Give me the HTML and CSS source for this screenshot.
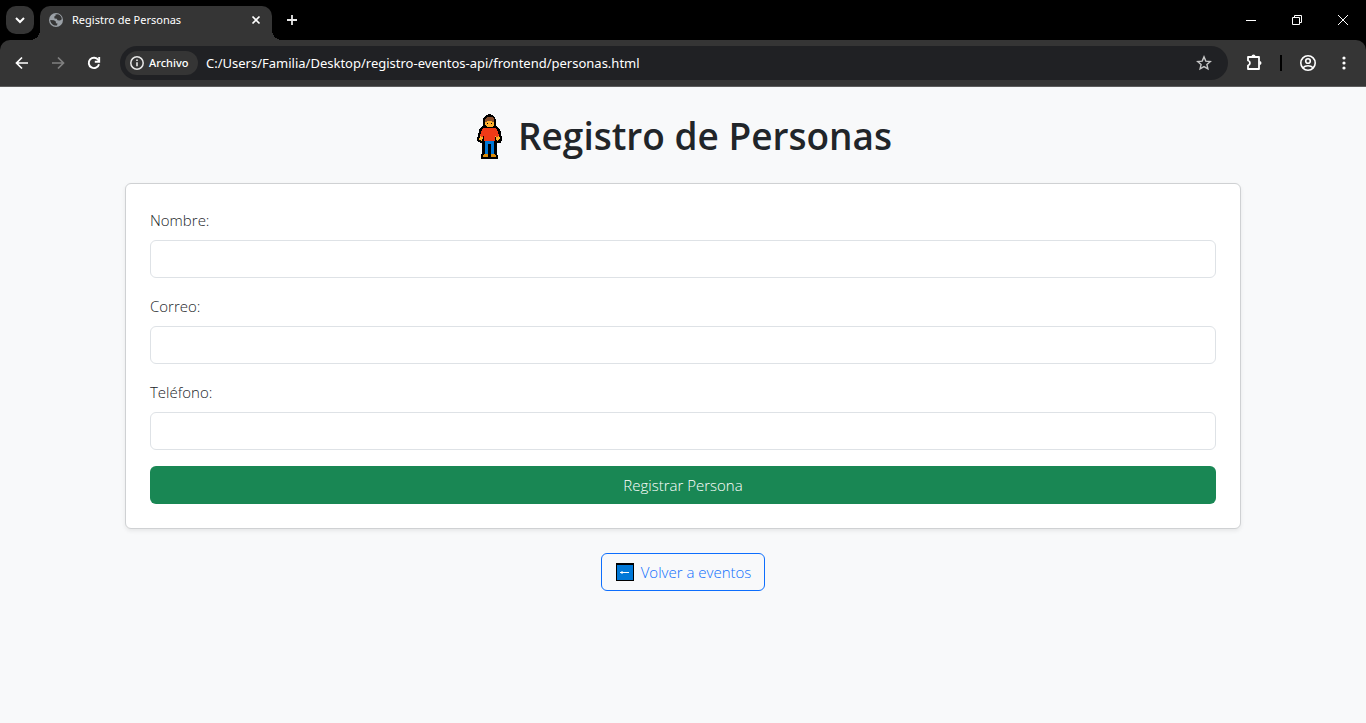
FILE: index.html
```html
<!DOCTYPE html>
<html lang="es">
<head>
<meta charset="utf-8">
<meta name="viewport" content="width=device-width, initial-scale=1">
<title>Registro de Personas</title>
<link rel="stylesheet" href="styles.css">
</head>
<body>
<header class="browser">
  <div class="tabstrip">
    <button class="tab-search" type="button" aria-label="Buscar pestañas">
      <svg width="16" height="16" viewBox="0 0 16 16" fill="none" stroke="#fff" stroke-width="2"><path d="M4 6l4 4 4-4"/></svg>
    </button>
    <div class="tab">
      <svg width="16" height="16" viewBox="0 0 16 16"><circle cx="8" cy="8" r="7" fill="#9aa0a6"/><path d="M7.500 2.500L10 2.200C12.500 3 13.800 5 13.800 7.200L12 8.500 9.500 8.200 8.800 6.800 6.500 6.500 6.200 4.500 7.500 4zM2.200 8L6 8.200 8 9.800 7.800 11.200 9.500 11.500 9 13.500C5.500 14 2.500 11.500 2.200 8z" fill="#353535"/></svg>
      <span class="tab-title">Registro de Personas</span>
      <button class="icon-button" type="button" aria-label="Cerrar pestaña">
        <svg width="16" height="16" viewBox="0 0 16 16" fill="none" stroke="#fff" stroke-width="1.700"><path d="M4.500 4.500l7 7M11.500 4.500l-7 7"/></svg>
      </button>
    </div>
    <button class="icon-button new-tab" type="button" aria-label="Nueva pestaña">
      <svg width="16" height="16" viewBox="0 0 16 16" fill="none" stroke="#e8e8e8" stroke-width="1.800"><path d="M8 3v10M3 8h10"/></svg>
    </button>
    <div class="window-controls">
      <button class="window-button" type="button" aria-label="Minimizar">
        <svg width="12" height="12" viewBox="0 0 12 12" stroke="#fff" fill="none"><path d="M1 6.500h10"/></svg>
      </button>
      <button class="window-button" type="button" aria-label="Restaurar">
        <svg width="12" height="12" viewBox="0 0 12 12" stroke="#fff" fill="none"><path d="M1.500 3.500h7v7h-7zM3.500 3.500v-2h7v7h-2"/></svg>
      </button>
      <button class="window-button" type="button" aria-label="Cerrar">
        <svg width="12" height="12" viewBox="0 0 12 12" stroke="#fff" fill="none"><path d="M1 1l10 10M11 1L1 11"/></svg>
      </button>
    </div>
  </div>
  <div class="toolbar">
    <div class="nav">
      <button class="icon-button" type="button" aria-label="Atrás">
        <svg width="16" height="16" viewBox="0 0 16 16" fill="none" stroke="#fff" stroke-width="1.700"><path d="M14 8H3M8 2.500L2.500 8 8 13.500"/></svg>
      </button>
      <button class="icon-button" type="button" aria-label="Adelante">
        <svg width="16" height="16" viewBox="0 0 16 16" fill="none" stroke="#808080" stroke-width="1.700"><path d="M2 8h11M8 2.500L13.500 8 8 13.500"/></svg>
      </button>
      <button class="icon-button" type="button" aria-label="Recargar">
        <svg width="16" height="16" viewBox="0 0 16 16" fill="none" stroke="#fff" stroke-width="1.900"><path d="M13 9.200A5.200 5.200 0 1 1 12.300 5L13 6"/><path d="M13.200 2v4.800H8.800"/></svg>
      </button>
    </div>
    <div class="omnibox">
      <button class="site-chip" type="button">
        <svg width="16" height="16" viewBox="0 0 16 16" fill="none" stroke="#e8e8e8"><circle cx="8" cy="8" r="6.200" stroke-width="1.500"/><path d="M8 7.200v4M8 4.500v1.600" stroke-width="1.600"/></svg>
        <span>Archivo</span>
      </button>
      <input class="address" type="text" aria-label="Dirección" value="C:/Users/Familia/Desktop/registro-eventos-api/frontend/personas.html">
      <button class="icon-button" type="button" aria-label="Añadir a marcadores">
        <svg width="16" height="16" viewBox="0 0 16 16" fill="none" stroke="#c7c7c7" stroke-width="1.400"><path d="M8 1.900l1.800 4.200 4.500.4-3.400 3 1 4.400L8 11.600l-3.900 2.300 1-4.400-3.400-3 4.500-.4z"/></svg>
      </button>
    </div>
    <div class="actions">
      <button class="icon-button" type="button" aria-label="Extensiones">
        <svg width="20" height="20" viewBox="0 0 20 20"><path d="M5 4h11v12H5v-3.500c2.600-.8 2.600-4.200 0-5z" fill="none" stroke="#fff" stroke-width="1.800" stroke-linejoin="round"/><path d="M8.500 3.500a2 2 0 0 1 4 0zM16.500 8a2 2 0 0 1 0 4z" fill="#fff"/></svg>
      </button>
      <span class="divider"></span>
      <button class="icon-button" type="button" aria-label="Perfil">
        <svg width="20" height="20" viewBox="0 0 20 20" fill="none" stroke="#fff" stroke-width="1.600"><circle cx="9" cy="10" r="7.200"/><circle cx="9" cy="8" r="2.300"/><path d="M4 14.800c2.400-2.800 7.600-2.800 10 0"/></svg>
      </button>
      <button class="icon-button" type="button" aria-label="Menú">
        <svg width="16" height="16" viewBox="0 0 16 16" fill="#fff"><circle cx="8" cy="3" r="1.600"/><circle cx="8" cy="8" r="1.600"/><circle cx="8" cy="13" r="1.600"/></svg>
      </button>
    </div>
  </div>
</header>
<main class="container">
  <h1 class="title">
    <svg width="28" height="46" viewBox="0 0 28 46" shape-rendering="crispEdges">
      <path d="M13 1L16 2 19 4 20 7V13L23 15 25 19 26 27 25 30H21V41L22 43V46H5V41L6 40V30L2 29 1 26 3 18 4 15 7 13V6L9 3z" fill="#000"/>
      <path d="M9 8h9v4l-2 2h-5l-2-2z" fill="#ffb02e"/>
      <path d="M11 4h5l2 2v3h-2V8h-5v1H9V6z" fill="#8b4f2a"/>
      <path d="M11 10h1v1h-1zM15 10h1v1h-1z" fill="#000"/>
      <path d="M5 19l-2 8 3 1 2-6zM22 19l2 7-3 2-2-6z" fill="#ffb02e"/>
      <path d="M8 15h11l2 1 2 7-2 1-2-1v5H8v-5l-2 1-2-1 2-7z" fill="#f03a17"/>
      <path d="M9 28h9v13h-3V31h-3v10H9z" fill="#0078d7"/>
      <path d="M9 41h3v3H7v-2zM15 41h3l2 1v2h-5z" fill="#d98a08"/>
    </svg>
    <span>Registro de Personas</span>
  </h1>
  <form class="card">
    <div class="field">
      <label for="nombre">Nombre:</label>
      <input class="control" id="nombre" type="text">
    </div>
    <div class="field">
      <label for="correo">Correo:</label>
      <input class="control" id="correo" type="email">
    </div>
    <div class="field">
      <label for="telefono">Teléfono:</label>
      <input class="control" id="telefono" type="tel">
    </div>
    <button class="submit" type="button">Registrar Persona</button>
  </form>
  <div class="back">
    <a class="back-link" href="#">
      <svg width="20" height="18" viewBox="0 0 20 18"><path d="M1 0h18v18H1z" fill="#000"/><path d="M2 2h16v15H2z" fill="#0078d7"/><path d="M5 9.500h9M7.500 8L6 9.500 7.500 11" fill="none" stroke="#fff"/></svg>
      <span>Volver a eventos</span>
    </a>
  </div>
</main>
</body>
</html>
```
FILE: styles.css
```css
* {
  box-sizing: border-box;
}

body {
  margin: 0;
  min-height: 100vh;
  background: #f8f9fa;
  color: #212529;
  font: 300 15px/24px "Open Sans", "Noto Sans", sans-serif;
}

button,
input {
  margin: 0;
  padding: 0;
  border: 0;
  background: none;
  color: inherit;
  font: inherit;
}

svg {
  display: block;
  flex: none;
}

.browser {
  background: #000;
  color: #fff;
  font: 400 11px/16px "Noto Sans", sans-serif;
}

.tabstrip {
  display: flex;
  height: 40px;
  padding-left: 6px;
}

.tab-search {
  display: grid;
  place-items: center;
  width: 28px;
  height: 28px;
  margin: 6px 6px 0 0;
  border-radius: 10px;
  background: #353535;
}

.tab {
  position: relative;
  display: flex;
  align-items: center;
  gap: 8px;
  width: 232px;
  height: 34px;
  margin-top: 6px;
  padding: 0 8px 6px;
  border-radius: 10px 10px 0 0;
  background: #353535;
}

.tab::before,
.tab::after {
  content: "";
  position: absolute;
  bottom: 0;
  width: 10px;
  height: 10px;
}

.tab::before {
  right: 100%;
  background: radial-gradient(circle at 0 0, transparent 10px, #353535 10px);
}

.tab::after {
  left: 100%;
  background: radial-gradient(circle at 100% 0, transparent 10px, #353535 10px);
}

.tab-title {
  flex: 1;
}

.icon-button {
  display: grid;
  place-items: center;
  flex: none;
}

.new-tab {
  width: 40px;
}

.window-controls {
  display: flex;
  margin-left: auto;
}

.window-button {
  display: grid;
  place-items: center;
  width: 46px;
}

.toolbar {
  display: flex;
  align-items: center;
  height: 47px;
  border-bottom: 1px solid #5c5c5c;
  border-radius: 10px 10px 0 0;
  background: #353535;
}

.nav {
  display: flex;
  gap: 20px;
  padding: 0 18px 0 14px;
}

.omnibox {
  display: flex;
  align-items: center;
  flex: 1;
  gap: 8px;
  height: 34px;
  padding: 0 16px 0 5px;
  border-radius: 17px;
  background: #202124;
}

.site-chip {
  display: flex;
  align-items: center;
  gap: 4px;
  width: 73px;
  height: 24px;
  padding-left: 4px;
  border-radius: 12px;
  background: #353535;
  font-weight: 500;
}

.address {
  flex: 1;
  min-width: 0;
  font-size: 13px;
}

.actions {
  display: flex;
  align-items: center;
  gap: 17px;
  padding: 0 14px 0 15px;
}

.divider {
  width: 2px;
  height: 16px;
  background: #000;
}

.container {
  max-width: 1140px;
  margin: 0 auto;
  padding: 24px 12px;
}

.title {
  display: flex;
  align-items: center;
  justify-content: center;
  gap: 14px;
  margin: 0 0 24px;
  padding: 2px 0 0 2px;
  font-size: 37px;
  font-weight: 600;
  line-height: 46px;
}

.card {
  padding: 24px;
  border: 1px solid #cfd1d3;
  border-radius: 6px;
  background: #fff;
  box-shadow: 0 2px 4px rgba(0, 0, 0, 0.075);
}

.field {
  display: flex;
  flex-direction: column;
  gap: 8px;
  margin-bottom: 16px;
}

.field label {
  align-self: flex-start;
}

.control {
  height: 38px;
  padding: 0 12px;
  border: 1px solid #dee2e6;
  border-radius: 6px;
  background: #fff;
}

.submit {
  width: 100%;
  height: 38px;
  border-radius: 6px;
  background: #198754;
  color: #fff;
}

.back {
  display: flex;
  justify-content: center;
  margin-top: 24px;
}

.back-link {
  display: flex;
  align-items: center;
  gap: 6px;
  height: 38px;
  padding: 0 13px;
  border: 1px solid #0d6efd;
  border-radius: 6px;
  color: #0d6efd;
  text-decoration: none;
}
```
